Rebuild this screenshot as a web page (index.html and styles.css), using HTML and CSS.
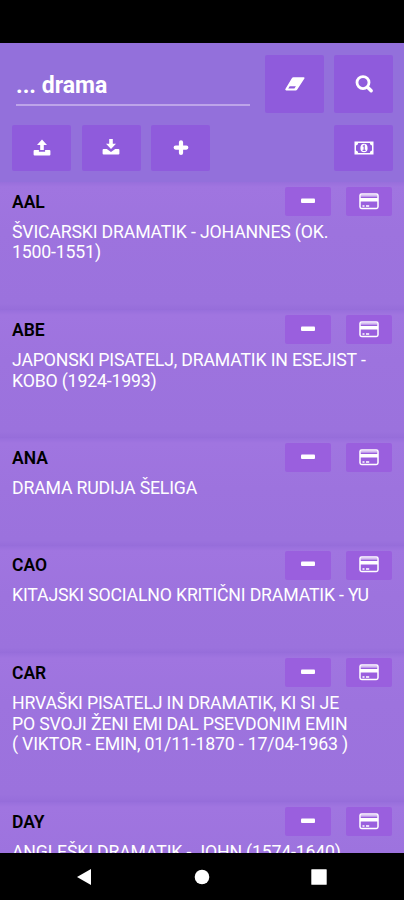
FILE: index.html
```html
<!DOCTYPE html>
<html lang="sl">
<head>
    <meta charset="UTF-8">
    <meta name="viewport" content="width=device-width, initial-scale=1.0">
    <title>Slovar</title>
    <link rel="stylesheet" href="styles.css">
</head>
<body>
    <!-- shared icons -->
    <svg class="sprite" aria-hidden="true">
        <symbol id="icon-minus" viewBox="0 0 20 20">
            <rect x="3" y="6.5" width="14" height="4.6" rx="1" fill="currentColor"/>
        </symbol>
        <symbol id="icon-card" viewBox="0 0 20 20">
            <rect x="1" y="2" width="18" height="14.4" rx="1.6" fill="none" stroke="currentColor" stroke-width="1.5"/>
            <path d="M1.5 3h17v1.6h-17z" fill="currentColor" opacity=".6"/>
            <path d="M1 6h18v3.6H1zM3.5 13.3h2v1.5h-2zM7 13.3h3.2v1.5H7z" fill="currentColor"/>
        </symbol>
    </svg>

    <div class="status-bar"></div>

    <header class="toolbar">
        <div class="search-row">
            <input class="search-input" type="text" value="... drama" aria-label="Iskanje">
            <button class="button button-tall" aria-label="Pobriši">
                <svg class="icon" viewBox="0 0 20 20">
                    <path fill="currentColor" fill-rule="evenodd" d="M8.4 3.2h10.3q1.2.1.7 1.3l-7.3 11.3q-.5.7-1.3.7H1.2Q-.1 16.3.4 14.9L7 4q.5-.8 1.4-.8zM4.7 12.2l-1.5 2.3h6.2l1.5-2.3z"/>
                </svg>
            </button>
            <button class="button button-tall" aria-label="Išči">
                <svg class="icon" viewBox="0 0 20 20" fill="none" stroke="currentColor">
                    <circle cx="9" cy="8.6" r="6" stroke-width="2.8"/>
                    <path d="M13.6 13.2l3.6 3.6" stroke-width="3.4" stroke-linecap="round"/>
                </svg>
            </button>
        </div>
        <div class="action-row">
            <button class="button" aria-label="Izvozi">
                <svg class="icon" viewBox="0 0 20 20" fill="currentColor">
                    <path d="M10 1.500l5 5.500h-3.200v5H8.200V7H5z"/>
                    <path d="M2.600 12h4.300v1.800h6.200V12h4.300q1 0 1 1v3.600q0 1-1 1H2.600q-1 0-1-1V13q0-1 1-1z"/>
                </svg>
            </button>
            <button class="button" aria-label="Uvozi">
                <svg class="icon" viewBox="0 0 20 20" fill="currentColor">
                    <path d="M8.200 1h3.600v4.700H15l-5 5.300-5-5.300h3.200z"/>
                    <path d="M2.600 11h3.200l4.200 3 4.200-3h3.200q1 0 1 1v3.600q0 1-1 1H2.600q-1 0-1-1V12q0-1 1-1z"/>
                </svg>
            </button>
            <button class="button" aria-label="Dodaj">
                <svg class="icon" viewBox="0 0 20 20">
                    <path d="M10 4.300v10.600M4.700 9.600h10.600" stroke="currentColor" stroke-width="4.200" stroke-linecap="round"/>
                </svg>
            </button>
            <button class="button button-right" aria-label="Podpri">
                <svg class="icon" viewBox="0 0 20 20">
                    <path fill="currentColor" fill-rule="evenodd" d="M.5 3.500h19v13H.5zM4.200 5Q4 7.200 2 7.400v5.200q2 .2 2.200 2.400h11.600q.2-2.200 2.200-2.400V7.400Q16 7.200 15.800 5z"/>
                    <ellipse cx="10" cy="10" rx="3.600" ry="4.300" fill="currentColor"/>
                    <path d="M8.800 8.400l1.400-.9v4.700M8.600 12.400h3" fill="none" stroke="#8f5bdc" stroke-width="1.100"/>
                </svg>
            </button>
        </div>
    </header>

    <main class="list">
        <article class="entry">
            <div class="entry-head">
                <h2>AAL</h2>
                <button class="button button-small" aria-label="Odstrani"><svg class="icon"><use href="#icon-minus"/></svg></button>
                <button class="button button-small" aria-label="Kartica"><svg class="icon"><use href="#icon-card"/></svg></button>
            </div>
            <p>ŠVICARSKI DRAMATIK - JOHANNES (OK.<br>1500-1551)</p>
        </article>
        <article class="entry">
            <div class="entry-head">
                <h2>ABE</h2>
                <button class="button button-small" aria-label="Odstrani"><svg class="icon"><use href="#icon-minus"/></svg></button>
                <button class="button button-small" aria-label="Kartica"><svg class="icon"><use href="#icon-card"/></svg></button>
            </div>
            <p>JAPONSKI PISATELJ, DRAMATIK IN ESEJIST -<br>KOBO (1924-1993)</p>
        </article>
        <article class="entry">
            <div class="entry-head">
                <h2>ANA</h2>
                <button class="button button-small" aria-label="Odstrani"><svg class="icon"><use href="#icon-minus"/></svg></button>
                <button class="button button-small" aria-label="Kartica"><svg class="icon"><use href="#icon-card"/></svg></button>
            </div>
            <p>DRAMA RUDIJA ŠELIGA</p>
        </article>
        <article class="entry">
            <div class="entry-head">
                <h2>CAO</h2>
                <button class="button button-small" aria-label="Odstrani"><svg class="icon"><use href="#icon-minus"/></svg></button>
                <button class="button button-small" aria-label="Kartica"><svg class="icon"><use href="#icon-card"/></svg></button>
            </div>
            <p>KITAJSKI SOCIALNO KRITIČNI DRAMATIK - YU</p>
        </article>
        <article class="entry">
            <div class="entry-head">
                <h2>CAR</h2>
                <button class="button button-small" aria-label="Odstrani"><svg class="icon"><use href="#icon-minus"/></svg></button>
                <button class="button button-small" aria-label="Kartica"><svg class="icon"><use href="#icon-card"/></svg></button>
            </div>
            <p>HRVAŠKI PISATELJ IN DRAMATIK, KI SI JE<br>PO SVOJI ŽENI EMI DAL PSEVDONIM EMIN<br>( VIKTOR - EMIN, 01/11-1870 - 17/04-1963 )</p>
        </article>
        <article class="entry">
            <div class="entry-head">
                <h2>DAY</h2>
                <button class="button button-small" aria-label="Odstrani"><svg class="icon"><use href="#icon-minus"/></svg></button>
                <button class="button button-small" aria-label="Kartica"><svg class="icon"><use href="#icon-card"/></svg></button>
            </div>
            <p>ANGLEŠKI DRAMATIK - JOHN (1574-1640)</p>
        </article>
    </main>

    <nav class="nav-bar">
        <svg viewBox="0 0 18 18"><path d="M1 9L15 1v16z"/></svg>
        <svg viewBox="0 0 18 18"><circle cx="9" cy="9" r="7.3"/></svg>
        <svg viewBox="0 0 18 18"><rect x="1.3" y="1.3" width="15.4" height="15.4" rx=".5"/></svg>
    </nav>
</body>
</html>
```
FILE: styles.css
```css
* {
    margin: 0;
    padding: 0;
    box-sizing: border-box;
}

body {
    font-family: Roboto, sans-serif;
    background: #9370db;
    height: 100vh;
    overflow: hidden;
    display: flex;
    flex-direction: column;
    color: #fff;
}

.sprite {
    display: none;
}

.status-bar {
    height: 43px;
    flex: none;
    background: #000;
}

.toolbar {
    flex: none;
    height: 139px;
    padding: 12px 11px 0 12px;
}

.search-row {
    display: flex;
    gap: 10px;
    height: 58px;
}

.search-input {
    flex: 1;
    min-width: 0;
    height: 51px;
    margin: 0 5px 0 4px;
    padding-top: 11px;
    border: none;
    border-bottom: 2px solid #bda4e9;
    outline: none;
    background: transparent;
    color: #fff;
    font: 700 23px Roboto, sans-serif;
}

.action-row {
    display: flex;
    gap: 10.5px;
    margin-top: 12px;
}

.button {
    flex: none;
    display: flex;
    align-items: center;
    justify-content: center;
    width: 59px;
    height: 46px;
    border: none;
    border-radius: 2px;
    background: #8f5bdc;
    color: #fff;
}

.button-tall {
    height: 58px;
}

.button-right {
    margin-left: auto;
}

.button-small {
    width: 46px;
    height: 29px;
    background: #9a5fde;
}

.icon {
    width: 20px;
    height: 20px;
}

.list {
    flex: 1;
    min-height: 0;
    overflow: hidden;
}

.entry {
    padding: 5px 12px 46.9px 12px;
    background: linear-gradient(#986fdc, #a075e0 5px, #9d73de 50px, #9b72dd 95%, #966dda);
}

.entry-head {
    display: flex;
    align-items: center;
    gap: 15px;
    margin-bottom: 5.7px;
}

.entry-head h2 {
    flex: 1;
    color: #000;
    font-size: 17.5px;
    font-weight: 600;
}

.entry p {
    font-size: 17.7px;
    letter-spacing: -0.17px;
    line-height: 20.8px;
    white-space: nowrap;
}

.nav-bar {
    flex: none;
    display: flex;
    align-items: center;
    justify-content: center;
    gap: 99px;
    height: 47px;
    background: #000;
}

.nav-bar svg {
    width: 18px;
    height: 18px;
    fill: #fff;
}
```
